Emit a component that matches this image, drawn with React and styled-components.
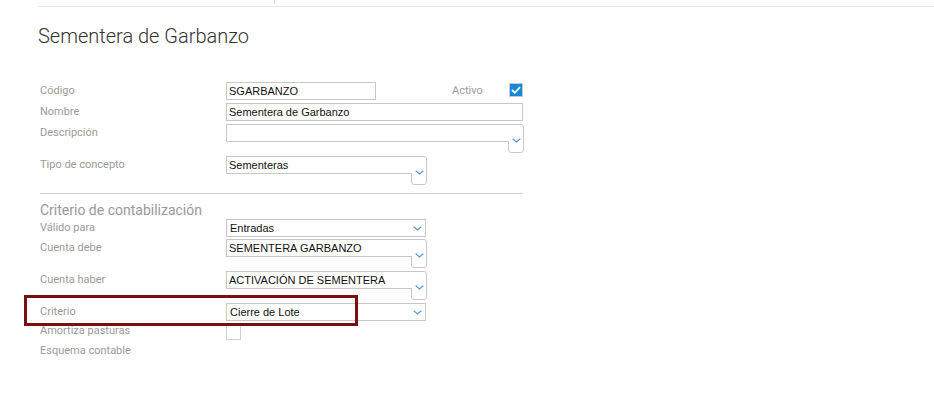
import React from 'react';
import styled, { createGlobalStyle } from 'styled-components';

const Global = createGlobalStyle`
  body {
    margin: 0;
    background: #fff;
    font-family: Roboto, "Liberation Sans", Arial, sans-serif;
  }
`;

const Page = styled.div`
  padding-left: 38px;
  width: 896px;
  height: 395px;
  overflow: hidden;
`;

const TopBar = styled.div`
  height: 6px;
  border-bottom: 1px solid #e8e8e8;
  display: flex;
  .tick {
    margin-left: 236px;
    width: 1px;
    height: 4px;
    background: #dcdcdc;
  }
`;

const Title = styled.h1`
  margin: 17px 0 0;
  font-size: 20px;
  font-weight: 300;
  color: #333;
  line-height: 24px;
`;

const Form = styled.div`
  margin-top: 34px;
  padding-left: 2px;
  width: 483px;
`;

const Row = styled.div`
  display: grid;
  grid-template-columns: 186px 1fr;
  align-items: start;
  margin-bottom: ${(p) => p.$mb ?? 3}px;
  position: relative;
`;

const Label = styled.div`
  font-size: 11px;
  line-height: 18px;
  color: #9a9a9a;
`;

const Field = styled.div`
  display: flex;
  align-items: flex-start;
`;

const Input = styled.div`
  box-sizing: border-box;
  width: ${(p) => p.$w}px;
  height: 18px;
  border: 1px solid #c8c8c8;
  ${(p) => (p.$combo ? 'border-right: none; position: relative; z-index: 1;' : '')}
  background: #fff;
  font-family: "Liberation Sans", Arial, sans-serif;
  font-size: 11px;
  line-height: 16px;
  color: #111;
  padding-left: 2px;
  white-space: nowrap;
  overflow: hidden;
`;

const ComboBtn = styled.div`
  box-sizing: border-box;
  width: 16px;
  height: ${(p) => p.$h}px;
  margin-left: -1px;
  border: 1px solid #c8c8c8;
  border-radius: 0 3px 3px 3px;
  display: flex;
  align-items: center;
  justify-content: center;
  padding-top: 3px;
`;

const Select = styled.div`
  box-sizing: border-box;
  width: 200px;
  height: 18px;
  border: 1px solid #c8c8c8;
  display: flex;
  align-items: center;
  justify-content: space-between;
  font-family: "Liberation Sans", Arial, sans-serif;
  font-size: 11px;
  color: #111;
  padding: 0 3px 0 3px;
`;

const Check = styled.div`
  box-sizing: border-box;
  width: ${(p) => (p.$on ? 14 : 15)}px;
  height: ${(p) => (p.$on ? 14 : 15)}px;
  margin-top: ${(p) => p.$mt ?? 0}px;
  border: 1px solid ${(p) => (p.$on ? '#c9c9c9' : '#d0d0d0')};
  background: ${(p) => (p.$on ? '#1688d9' : '#fff')};
  display: flex;
  align-items: center;
  justify-content: center;
`;

const Activo = styled(Label)`
  margin-left: 76px;
  width: 57px;
`;

const Divider = styled.div`
  height: 1px;
  background: #cfcfcf;
  margin: 8px 0 7px;
`;

const Section = styled.div`
  font-size: 14px;
  line-height: 18px;
  color: #999;
`;

const Highlight = styled.div`
  position: absolute;
  left: -16px;
  top: -8px;
  width: 334px;
  height: 31px;
  box-sizing: border-box;
  border: 3px solid #7a0f10;
  pointer-events: none;
  z-index: 2;
`;

const Chevron = () => (
  <svg width="9" height="5" viewBox="0 0 9 5">
    <path d="M0.7 0.7 L4.5 4 L8.3 0.7" fill="none" stroke="#5a97e0" strokeWidth="1.2" />
  </svg>
);

const Tick = () => (
  <svg width="10" height="8" viewBox="0 0 10 8">
    <path d="M1 4 L3.8 6.8 L9 1.2" fill="none" stroke="#fff" strokeWidth="1.8" />
  </svg>
);

const Combo = ({ w, value }) => (
  <Field>
    <Input $w={w} $combo>{value}</Input>
    <ComboBtn $h={29}>
      <Chevron />
    </ComboBtn>
  </Field>
);

export default function App() {
  return (
    <Page>
      <Global />
      <TopBar>
        <span className="tick" />
      </TopBar>
      <Title>Sementera de Garbanzo</Title>
      <Form>
        <Row>
          <Label>Código</Label>
          <Field>
            <Input $w={150}>SGARBANZO</Input>
            <Activo>Activo</Activo>
            <Check $on $mt={1}>
              <Tick />
            </Check>
          </Field>
        </Row>
        <Row>
          <Label>Nombre</Label>
          <Input $w={297}>Sementera de Garbanzo</Input>
        </Row>
        <Row>
          <Label>Descripción</Label>
          <Combo w={283} value="" />
        </Row>
        <Row $mb={0}>
          <Label>Tipo de concepto</Label>
          <Combo w={186} value="Sementeras" />
        </Row>
        <Divider />
        <Section>Criterio de contabilización</Section>
        <Row $mb={2}>
          <Label>Válido para</Label>
          <Select>
            Entradas
            <Chevron />
          </Select>
        </Row>
        <Row>
          <Label>Cuenta debe</Label>
          <Combo w={186} value="SEMENTERA GARBANZO" />
        </Row>
        <Row>
          <Label>Cuenta haber</Label>
          <Combo w={186} value="ACTIVACIÓN DE SEMENTERA" />
        </Row>
        <Row $mb={1}>
          <Label>Criterio</Label>
          <Select>
            Cierre de Lote
            <Chevron />
          </Select>
          <Highlight />
        </Row>
        <Row $mb={2}>
          <Label>Amortiza pasturas</Label>
          <Check $mt={3} />
        </Row>
        <Row>
          <Label>Esquema contable</Label>
        </Row>
      </Form>
    </Page>
  );
}
